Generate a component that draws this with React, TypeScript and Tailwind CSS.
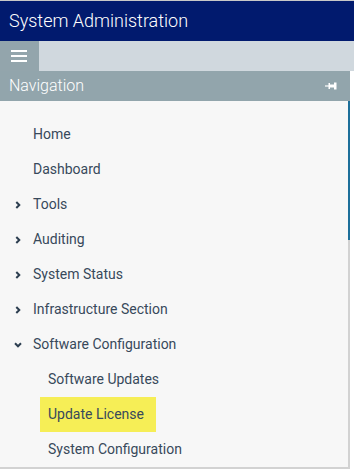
import React from "react";

const Chevron = ({ open }: { open?: boolean }) => (
  <svg width="8" height="8" viewBox="0 0 8 8" className="shrink-0">
    {open ? (
      <path d="M1 2.3 L4 5.3 L7 2.3" fill="none" stroke="#2c3e50" strokeWidth="2" />
    ) : (
      <path d="M2.3 1 L5.3 4 L2.3 7" fill="none" stroke="#2c3e50" strokeWidth="2" />
    )}
  </svg>
);

type Item = { label: string; level: 0 | 1; chevron?: "open" | "closed"; highlight?: boolean };

const items: Item[] = [
  { label: "Home", level: 0 },
  { label: "Dashboard", level: 0 },
  { label: "Tools", level: 0, chevron: "closed" },
  { label: "Auditing", level: 0, chevron: "closed" },
  { label: "System Status", level: 0, chevron: "closed" },
  { label: "Infrastructure Section", level: 0, chevron: "closed" },
  { label: "Software Configuration", level: 0, chevron: "open" },
  { label: "Software Updates", level: 1 },
  { label: "Update License", level: 1, highlight: true },
  { label: "System Configuration", level: 1 },
];

export default function App() {
  return (
    <div
      className="w-[354px] h-[472px] bg-white overflow-hidden border-t border-[#c8c8c8]"
      style={{ fontFamily: "Roboto, 'Liberation Sans', sans-serif" }}
    >
      <div className="h-[40px] bg-[#011a6e] flex items-center pl-[9px]">
        <span className="text-white text-[18px] font-light leading-none">System Administration</span>
      </div>
      <div className="h-[30px] bg-[#d0d8de] flex">
        <div className="w-[39px] h-full bg-[#93a5ac] flex flex-col justify-center items-start pl-[11px] gap-[3px]">
          <div className="w-[16px] h-[2px] bg-white" />
          <div className="w-[16px] h-[2px] bg-white" />
          <div className="w-[16px] h-[2px] bg-white" />
        </div>
      </div>
      <div className="w-[350px]">
        <div className="h-[30px] bg-[#92a5ac] flex items-center justify-between pl-[9px] pr-[13px]">
          <span className="text-white text-[16px] font-light leading-none">Navigation</span>
          <svg width="12" height="8" viewBox="0 0 12 8">
            <path d="M0 4 H4" stroke="#ffffff" strokeWidth="1.2" />
            <rect x="4" y="2.5" width="5" height="3" fill="#ffffff" />
            <rect x="9" y="0.5" width="2.5" height="7" fill="#ffffff" />
            <rect x="3.5" y="1" width="1.5" height="6" fill="#ffffff" />
          </svg>
        </div>
        <div className="relative h-[368px] bg-[#f7f7f7] border-r-2 border-b-2 border-[#d2d2d2] pt-[16px]">
          <div className="absolute right-[-2px] top-0 h-[139px] w-[2px] bg-[#1d6f9a]" />
          {items.map((it) => (
            <div key={it.label} className="h-[35px] flex items-center">
              {it.level === 0 ? (
                <div className="flex items-center h-full">
                  <div className="w-[33px] flex items-center pl-[14px]">
                    {it.chevron && <Chevron open={it.chevron === "open"} />}
                  </div>
                  <span className="text-[14px] text-[#38495b]">{it.label}</span>
                </div>
              ) : (
                <div className="pl-[40px] h-full flex items-center">
                  <div
                    className={
                      it.highlight
                        ? "h-full flex items-center bg-[#f6ee56] px-[8px] w-[116px]"
                        : "h-full flex items-center px-[8px]"
                    }
                  >
                    <span className="text-[14px] text-[#38495b] whitespace-nowrap">{it.label}</span>
                  </div>
                </div>
              )}
            </div>
          ))}
        </div>
      </div>
    </div>
  );
}
